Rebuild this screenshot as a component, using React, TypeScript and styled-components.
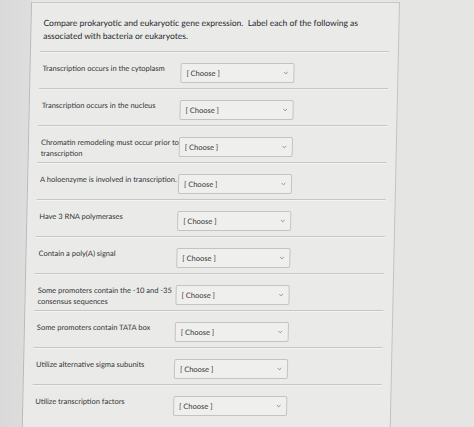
import React from "react";
import styled, { createGlobalStyle } from "styled-components";

const Global = createGlobalStyle`
  html, body { margin: 0; padding: 0; }
  body {
    background: #e4e5e3;
    font-family: Lato, "Open Sans", sans-serif;
    overflow: hidden;
  }
`;

const Page = styled.div`
  width: 474px;
  height: 427px;
  overflow: hidden;
  background: linear-gradient(90deg, #d8d9d8 0, #dddedd 32px, #e5e6e3 32px);
  padding: 2px 0 0 31px;
  box-sizing: border-box;
`;

const Sheet = styled.div`
  width: 369px;
  min-height: 440px;
  box-sizing: border-box;
  background: #eaebe9;
  border-left: 1px solid #b9bab8;
  border-right: 1px solid #c2c3c1;
  border-top: 1px solid #c9cac8;
  padding: 14px 9px 0 9px;
  transform: skewX(-1.25deg);
  transform-origin: top center;
`;

const Title = styled.p`
  margin: 0 0 0 3px;
  font-size: 8.5px;
  line-height: 12.5px;
  color: #27282a;
  white-space: nowrap;
`;

const List = styled.div`
  margin-top: 9px;
`;

const Row = styled.div`
  display: flex;
  align-items: flex-start;
  height: 37px;
  box-sizing: border-box;
  border-top: 1px solid #c6c7c5;
  box-shadow: inset 0 1px 0 #f3f3f1;
  padding: 11px 0 0 3px;
`;

const Label = styled.div`
  width: 138px;
  flex: none;
  font-size: 7.5px;
  line-height: 11px;
  color: #323334;
  white-space: nowrap;
`;

const Select = styled.div`
  width: 114px;
  height: 20px;
  box-sizing: border-box;
  border: 1px solid #c3c4c2;
  border-radius: 2px;
  background: #efefed;
  display: flex;
  align-items: center;
  justify-content: space-between;
  padding: 0 5px;
  font-size: 7.5px;
  color: #343535;
`;

const Chevron = styled.svg`
  width: 5px;
  height: 4px;
  flex: none;
`;

const items: string[][] = [
  ["Transcription occurs in the cytoplasm"],
  ["Transcription occurs in the nucleus"],
  ["Chromatin remodeling must occur prior to", "transcription"],
  ["A holoenzyme is involved in transcription."],
  ["Have 3 RNA polymerases"],
  ["Contain a poly(A) signal"],
  ["Some promoters contain the -10 and -35", "consensus sequences"],
  ["Some promoters contain TATA box"],
  ["Utilize alternative sigma subunits"],
  ["Utilize transcription factors"],
];

export default function App() {
  return (
    <>
      <Global />
      <Page>
        <Sheet>
          <Title>
            Compare prokaryotic and eukaryotic gene expression.&nbsp; Label each of the following as
            <br />
            associated with bacteria or eukaryotes.
          </Title>
          <List>
            {items.map((lines, i) => (
              <Row key={i}>
                <Label>
                  {lines.map((l, j) => (
                    <React.Fragment key={j}>
                      {j > 0 && <br />}
                      {l}
                    </React.Fragment>
                  ))}
                </Label>
                <Select>
                  <span>[ Choose ]</span>
                  <Chevron viewBox="0 0 5 4">
                    <path d="M0.7 1 L2.5 2.8 L4.3 1" fill="none" stroke="#858686" strokeWidth="0.9" />
                  </Chevron>
                </Select>
              </Row>
            ))}
          </List>
        </Sheet>
      </Page>
    </>
  );
}
